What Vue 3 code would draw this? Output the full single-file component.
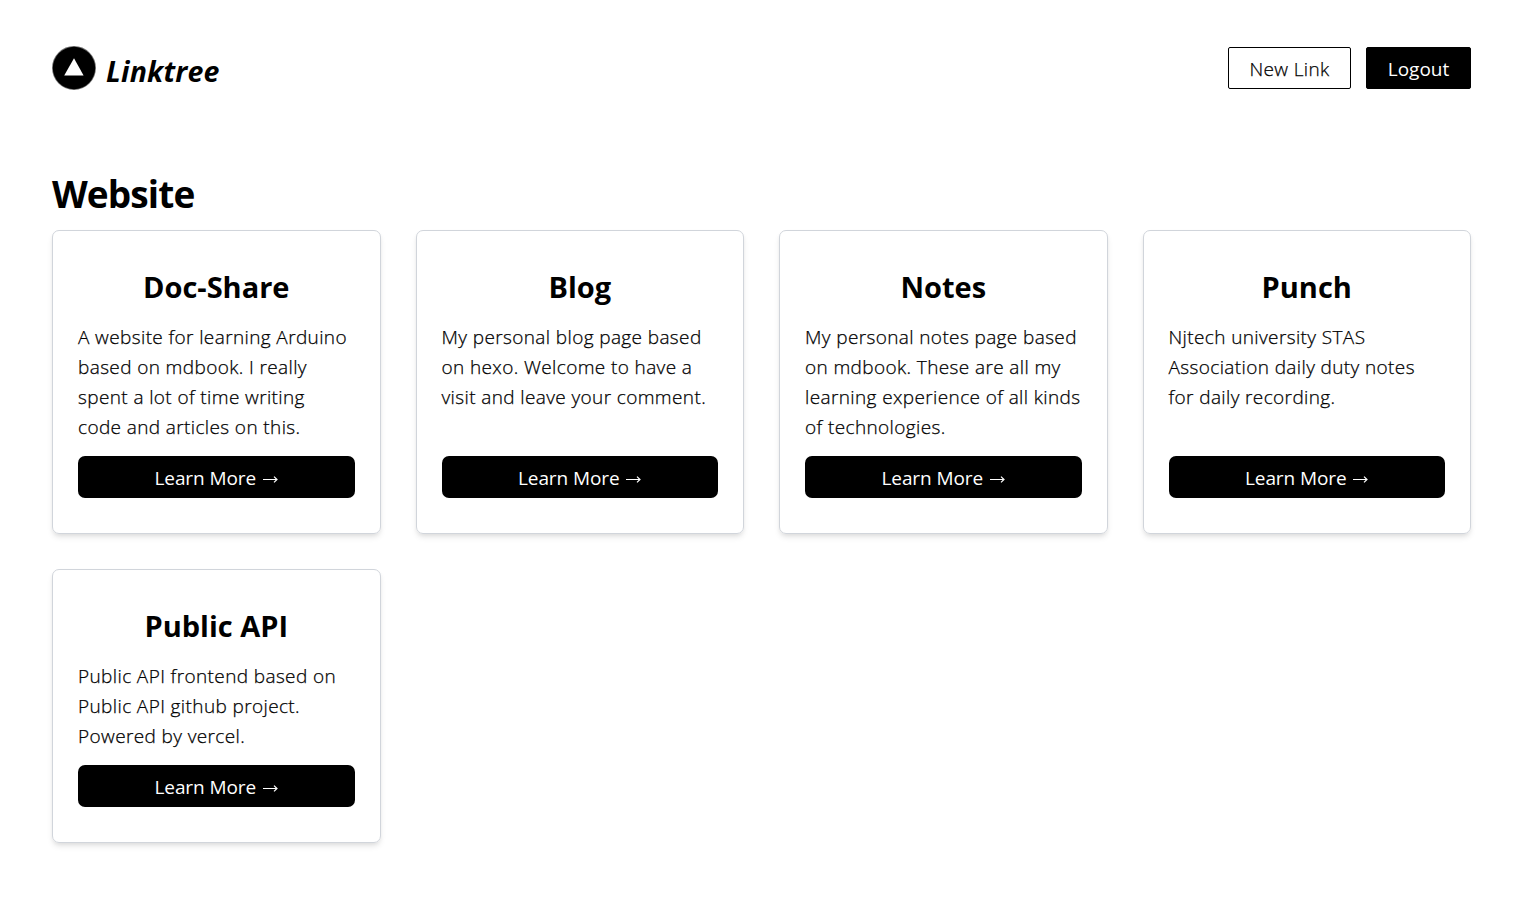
<script setup>
const cards = [
  {
    title: 'Doc-Share',
    lines: ['A website for learning Arduino', 'based on mdbook. I really', 'spent a lot of time writing', 'code and articles on this.'],
  },
  {
    title: 'Blog',
    lines: ['My personal blog page based', 'on hexo. Welcome to have a', 'visit and leave your comment.'],
  },
  {
    title: 'Notes',
    lines: ['My personal notes page based', 'on mdbook. These are all my', 'learning experience of all kinds', 'of technologies.'],
  },
  {
    title: 'Punch',
    lines: ['Njtech university STAS', 'Association daily duty notes', 'for daily recording.'],
  },
  {
    title: 'Public API',
    lines: ['Public API frontend based on', 'Public API github project.', 'Powered by vercel.'],
  },
]
</script>

<template>
  <div class="page">
    <header class="header">
      <a class="brand">
        <svg class="logo" viewBox="0 0 44 44">
          <circle cx="22" cy="22" r="21.2" fill="#000" stroke="#000" stroke-opacity="0.55" stroke-width="1.5" />
          <path d="M22 12.3 L31.6 29.4 H12.2 Z" fill="#fff" />
        </svg>
        <span class="brand-name">Linktree</span>
      </a>
      <nav class="actions">
        <button class="btn new-link">New Link</button>
        <button class="btn logout">Logout</button>
      </nav>
    </header>
    <main>
      <h1 class="heading">Website</h1>
      <section class="grid">
        <article v-for="card in cards" :key="card.title" class="card">
          <h2 class="title">{{ card.title }}</h2>
          <p class="text">
            <span v-for="line in card.lines" :key="line" class="line">{{ line }}</span>
          </p>
          <button class="more">
            <span>Learn More</span>
            <svg class="arrow" viewBox="0 0 15 10">
              <path d="M0 5.5 H13.6" fill="none" stroke="#fff" stroke-width="1" />
              <path d="M11 2.6 L14 5.5 L11 8.4" fill="none" stroke="#fff" stroke-width="1.2" />
            </svg>
          </button>
        </article>
      </section>
    </main>
  </div>
</template>

<style>
body {
  background: #fff;
}
</style>

<style scoped>
.page {
  box-sizing: border-box;
  height: 901px;
  padding: 46px 57px 0 52px;
  font-family: "Open Sans", "Noto Sans", sans-serif;
  color: #000;
  overflow: hidden;
}
.header {
  display: flex;
  justify-content: space-between;
  height: 44px;
}
.brand {
  display: flex;
  gap: 10px;
}
.logo {
  width: 44px;
  height: 44px;
}
.brand-name {
  padding-top: 5px;
  font-size: 28.5px;
  line-height: 40px;
  font-weight: 700;
  font-style: italic;
  letter-spacing: 0.2px;
}
.actions {
  display: flex;
  gap: 15px;
  padding-top: 1px;
}
.btn {
  box-sizing: border-box;
  height: 42px;
  padding: 2px 0 0;
  border: 1px solid #000;
  border-radius: 2px;
  font-family: inherit;
  font-size: 19px;
  line-height: 38px;
}
.new-link {
  width: 123px;
  background: #fff;
  color: #000;
  font-weight: 300;
  letter-spacing: 0.35px;
  -webkit-text-stroke: 0.25px #000;
}
.logout {
  width: 105px;
  background: #000;
  color: #fff;
}
.heading {
  margin: 79px 0 11px;
  font-size: 37px;
  line-height: 50px;
  font-weight: 700;
  letter-spacing: -0.9px;
}
.grid {
  display: grid;
  grid-template-columns: repeat(4, 1fr);
  gap: 35px;
}
.card {
  box-sizing: border-box;
  display: flex;
  flex-direction: column;
  padding: 35px 25px;
  border: 1px solid #d1d5db;
  border-radius: 7px;
  box-shadow: 0 4px 6px -1px rgba(0, 0, 0, 0.1), 0 2px 4px -1px rgba(0, 0, 0, 0.06);
}
.title {
  margin: 0 0 14px;
  font-size: 29px;
  line-height: 42px;
  font-weight: 700;
  text-align: center;
}
.text {
  flex: 1;
  margin: 0 0 14px;
  font-size: 19px;
  line-height: 30px;
  font-weight: 300;
  letter-spacing: 0.38px;
  -webkit-text-stroke: 0.25px #000;
}
.line {
  display: block;
  white-space: nowrap;
}
.more {
  display: flex;
  justify-content: center;
  align-items: center;
  gap: 7px;
  height: 42px;
  padding: 2px 0 0;
  border: 0;
  border-radius: 7px;
  background: #000;
  color: #fff;
  font-family: inherit;
  font-size: 19px;
  line-height: 30px;
  letter-spacing: -0.1px;
}
.arrow {
  width: 15px;
  height: 10px;
  margin-top: 2px;
}
</style>
